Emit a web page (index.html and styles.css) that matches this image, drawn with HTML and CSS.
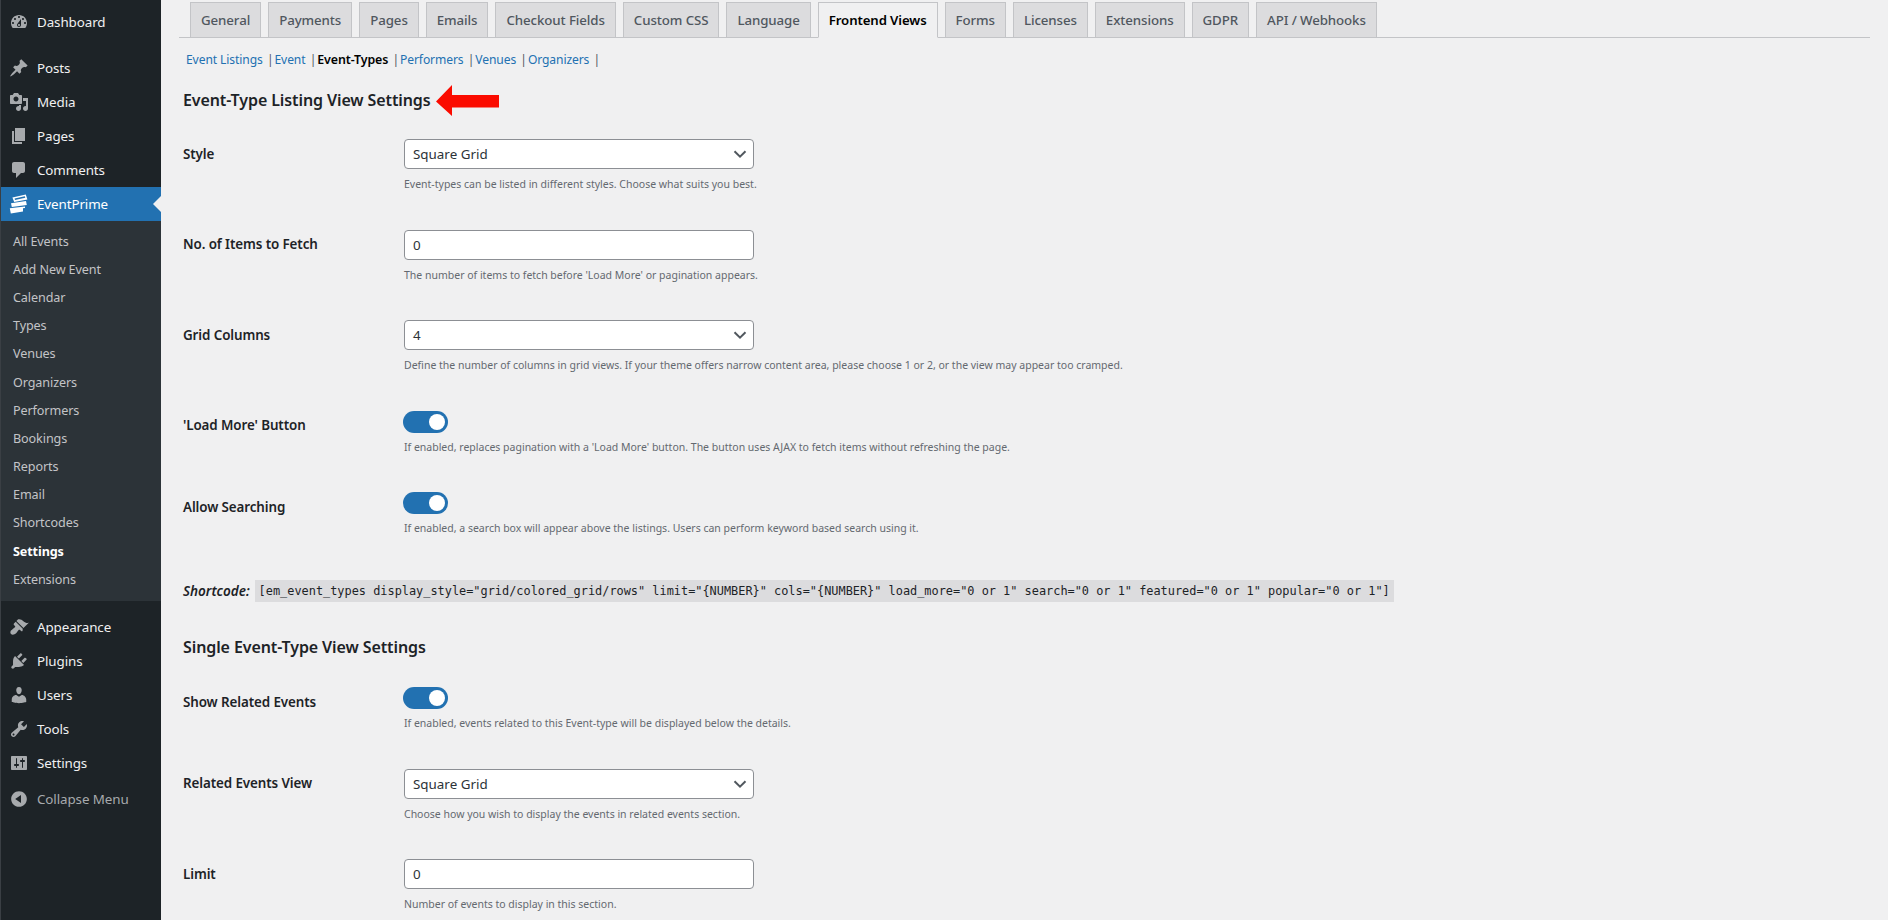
FILE: index.html
```html
<!DOCTYPE html>
<html lang="en">
<head>
<meta charset="utf-8">
<title>EventPrime Settings</title>
<link rel="stylesheet" href="styles.css">
</head>
<body>
<div class="page">
<aside class="sidebar">
  <nav class="menu">
    <a class="item gap-after"><svg class="ic" viewBox="0 0 20 20"><path fill-rule="evenodd" d="M3.76 16h12.48c1.1-1.37 1.76-3.11 1.76-5 0-4.42-3.58-8-8-8s-8 3.58-8 8c0 1.89.66 3.63 1.76 5zM10 4c.55 0 1 .45 1 1s-.45 1-1 1-1-.45-1-1 .45-1 1-1zM6 6c.55 0 1 .45 1 1s-.45 1-1 1-1-.45-1-1 .45-1 1-1zm8 0c.55 0 1 .45 1 1s-.45 1-1 1-1-.45-1-1 .45-1 1-1zm-5.37 5.55L12 7v6c0 1.1-.9 2-2 2s-2-.9-2-2c0-.57.24-1.08.63-1.45zM4 10c.55 0 1 .45 1 1s-.45 1-1 1-1-.45-1-1 .45-1 1-1zm12 0c.55 0 1 .45 1 1s-.45 1-1 1-1-.45-1-1 .45-1 1-1zm-5 3c0-.55-.45-1-1-1s-1 .45-1 1 .45 1 1 1 1-.45 1-1z"/></svg>Dashboard</a>
    <a class="item"><svg class="ic" viewBox="0 0 20 20"><path d="M10.44 3.02l1.82-1.82 6.36 6.35-1.83 1.82c-1.05-.68-2.48-.57-3.41.36l-.75.75c-.92.93-1.04 2.35-.35 3.41l-1.83 1.82-2.41-2.41-2.8 2.79c-.42.42-3.38 2.71-3.8 2.29s1.86-3.39 2.28-3.81l2.79-2.79L4.1 9.36l1.83-1.82c1.05.69 2.48.57 3.4-.36l.75-.75c.93-.92 1.05-2.35.36-3.41z"/></svg>Posts</a>
    <a class="item"><svg class="ic" viewBox="0 0 20 20"><path fill-rule="evenodd" d="M13 11V4c0-.55-.45-1-1-1h-1.67L9 1H5L3.67 3H2c-.55 0-1 .45-1 1v7c0 .55.45 1 1 1h10c.55 0 1-.45 1-1zM7 4.5c1.38 0 2.5 1.12 2.5 2.5S8.38 9.5 7 9.5 4.5 8.38 4.5 7 5.62 4.5 7 4.5zM14 6h5v10.5c0 1.38-1.12 2.5-2.5 2.5S14 17.88 14 16.5s1.12-2.5 2.5-2.5c.17 0 .34.02.5.05V9h-3V6zm-4 8.05V13h2v3.5c0 1.38-1.12 2.5-2.5 2.5S7 17.88 7 16.5 8.12 14 9.5 14c.17 0 .34.02.5.05z"/></svg>Media</a>
    <a class="item"><svg class="ic" viewBox="0 0 20 20"><path d="M6 15V2h10v13H6zm-1 1h8v2H3V5h2v11z"/></svg>Pages</a>
    <a class="item"><svg class="ic" viewBox="0 0 20 20"><path d="M5 2h9c1.1 0 2 .9 2 2v7c0 1.1-.9 2-2 2h-2l-5 5v-5H5c-1.1 0-2-.9-2-2V4c0-1.1.9-2 2-2z"/></svg>Comments</a>
    <a class="item active"><svg class="ic ic-ep" viewBox="0 0 20 20"><path fill-rule="evenodd" d="M3.4 3.6 16.8.6l1.6 4.8L5.2 8zM5.6 4.4l.4 1.5 10.3-2.2-.5-1.4zM2 9.2 17 6.9l.8 4.1-15 2.1zM.8 14.3 16 12.5v1.5l-2 .3v3.2L1.8 19.4z"/></svg>EventPrime</a>
    <div class="submenu">
      <a>All Events</a>
      <a>Add New Event</a>
      <a>Calendar</a>
      <a>Types</a>
      <a>Venues</a>
      <a>Organizers</a>
      <a>Performers</a>
      <a>Bookings</a>
      <a>Reports</a>
      <a>Email</a>
      <a>Shortcodes</a>
      <a class="current">Settings</a>
      <a>Extensions</a>
    </div>
    <a class="item"><svg class="ic" viewBox="0 0 20 20"><path d="M14.48 11.06L7.41 3.99l1.5-1.5c.5-.56 2.3-.47 3.51.32 1.21.8 1.43 1.28 2.91 2.1 1.18.64 2.45 1.26 4.45.85zm-.71.71L6.7 4.7 4.93 6.47c-.39.39-.39 1.02 0 1.41l1.06 1.06c.39.39.39 1.03 0 1.42-.6.6-1.43 1.11-2.21 1.69-.35.26-.7.53-1.01.84C1.43 13.23.78 15.78 2 17c1.23 1.22 3.77.57 5.1-.76.31-.31.58-.66.85-1.02.57-.78 1.08-1.61 1.69-2.21.39-.39 1.02-.39 1.41 0l1.06 1.06c.39.39 1.02.39 1.41 0z"/></svg>Appearance</a>
    <a class="item"><svg class="ic" viewBox="0 0 20 20"><path d="M13.11 4.36L9.87 7.6 8 5.73l3.24-3.24c.35-.34 1.05-.2 1.56.32.52.51.66 1.21.31 1.55zm-8 1.77l.91-1.12 9.01 9.01-1.19.84c-.71.71-2.63 1.16-3.82 1.16H6.14L4.9 17.26c-.59.59-1.54.59-2.12 0-.59-.58-.59-1.53 0-2.12l1.24-1.24v-3.88c0-1.13.4-3.19 1.09-3.89zm7.26 3.97l3.24-3.24c.34-.35 1.04-.21 1.55.31.52.51.66 1.21.31 1.55l-3.24 3.25z"/></svg>Plugins</a>
    <a class="item"><svg class="ic" viewBox="0 0 20 20"><path d="M10 9.25c-2.27 0-2.73-3.44-2.73-3.44C7 4.02 7.82 2 9.97 2c2.16 0 2.98 2.02 2.71 3.81 0 0-.41 3.44-2.68 3.44zm0 2.57L12.72 10c2.39 0 4.52 2.33 4.52 4.53v2.49s-3.65 1.13-7.24 1.13c-3.65 0-7.24-1.13-7.24-1.13v-2.49c0-2.25 1.94-4.48 4.47-4.48z"/></svg>Users</a>
    <a class="item"><svg class="ic" viewBox="0 0 20 20"><path fill-rule="evenodd" d="M16.68 9.77c-1.34 1.34-3.3 1.67-4.95.99l-5.41 6.52c-.99.99-2.59.99-3.58 0s-.99-2.59 0-3.57l6.52-5.42c-.68-1.65-.35-3.61.99-4.95 1.28-1.28 3.12-1.62 4.72-1.06l-2.89 2.89 2.82 2.82 2.86-2.87c.53 1.58.18 3.39-1.08 4.65zM3.81 16.21c.4.39 1.04.39 1.43 0 .4-.4.4-1.04 0-1.43-.39-.4-1.03-.4-1.43 0-.39.39-.39 1.03 0 1.43z"/></svg>Tools</a>
    <a class="item"><svg class="ic" viewBox="0 0 20 20"><path fill-rule="evenodd" d="M18 16V4c0-.55-.45-1-1-1H3c-.55 0-1 .45-1 1v12c0 .55.45 1 1 1h14c.55 0 1-.45 1-1zM8 11h1c.55 0 1 .45 1 1s-.45 1-1 1H8v1.5c0 .28-.22.5-.5.5s-.5-.22-.5-.5V13H6c-.55 0-1-.45-1-1s.45-1 1-1h1V5.5c0-.28.22-.5.5-.5s.5.22.5.5V11zm5-2h-1c-.55 0-1-.45-1-1s.45-1 1-1h1V5.5c0-.28.22-.5.5-.5s.5.22.5.5V7h1c.55 0 1 .45 1 1s-.45 1-1 1h-1v5.5c0 .28-.22.5-.5.5s-.5-.22-.5-.5V9z"/></svg>Settings</a>
    <a class="item collapse"><svg class="ic" viewBox="0 0 20 20"><path fill-rule="evenodd" d="M10 2.16c4.33 0 7.84 3.51 7.84 7.84s-3.51 7.84-7.84 7.84S2.16 14.33 2.16 10 5.71 2.16 10 2.16zm2 11.72V6.12L6.18 9.97z"/></svg>Collapse Menu</a>
  </nav>
</aside>
<main class="content">
  <div class="tabs">
    <a class="tab">General</a>
    <a class="tab">Payments</a>
    <a class="tab">Pages</a>
    <a class="tab">Emails</a>
    <a class="tab">Checkout Fields</a>
    <a class="tab">Custom CSS</a>
    <a class="tab">Language</a>
    <a class="tab tab-active">Frontend Views</a>
    <a class="tab">Forms</a>
    <a class="tab">Licenses</a>
    <a class="tab">Extensions</a>
    <a class="tab">GDPR</a>
    <a class="tab">API / Webhooks</a>
  </div>
  <div class="subnav">
    <a>Event Listings</a><span class="sep">|</span>
    <a>Event</a><span class="sep">|</span>
    <a class="sub-current">Event-Types</a><span class="sep">|</span>
    <a>Performers</a><span class="sep">|</span>
    <a>Venues</a><span class="sep">|</span>
    <a>Organizers</a><span class="sep">|</span>
  </div>
  <h2 class="title first">Event-Type Listing View Settings
    <svg class="arrow" viewBox="0 0 63 31"><path d="M0 16.5 16 0v10h47v12.5H16V31z"/></svg>
  </h2>

  <div class="row">
    <div class="label">Style</div>
    <div class="field">
      <div class="control select">Square Grid<svg class="chev" viewBox="0 0 16 16"><path d="M2.5 5.2 8 10.6l5.5-5.4"/></svg></div>
      <p class="hint">Event-types can be listed in different styles. Choose what suits you best.</p>
    </div>
  </div>
  <div class="row">
    <div class="label">No. of Items to Fetch</div>
    <div class="field">
      <div class="control">0</div>
      <p class="hint">The number of items to fetch before 'Load More' or pagination appears.</p>
    </div>
  </div>
  <div class="row">
    <div class="label">Grid Columns</div>
    <div class="field">
      <div class="control select">4<svg class="chev" viewBox="0 0 16 16"><path d="M2.5 5.2 8 10.6l5.5-5.4"/></svg></div>
      <p class="hint">Define the number of columns in grid views. If your theme offers narrow content area, please choose 1 or 2, or the view may appear too cramped.</p>
    </div>
  </div>
  <div class="row row-toggle">
    <div class="label">'Load More' Button</div>
    <div class="field">
      <div class="toggle"></div>
      <p class="hint hint-toggle">If enabled, replaces pagination with a 'Load More' button. The button uses AJAX to fetch items without refreshing the page.</p>
    </div>
  </div>
  <div class="row row-toggle">
    <div class="label">Allow Searching</div>
    <div class="field">
      <div class="toggle"></div>
      <p class="hint hint-toggle">If enabled, a search box will appear above the listings. Users can perform keyword based search using it.</p>
    </div>
  </div>
  <div class="shortcode"><em>Shortcode:</em><code>[em_event_types display_style="grid/colored_grid/rows" limit="{NUMBER}" cols="{NUMBER}" load_more="0 or 1" search="0 or 1" featured="0 or 1" popular="0 or 1"]</code></div>
  <h2 class="title second">Single Event-Type View Settings</h2>
  <div class="row row-toggle">
    <div class="label">Show Related Events</div>
    <div class="field">
      <div class="toggle"></div>
      <p class="hint hint-toggle">If enabled, events related to this Event-type will be displayed below the details.</p>
    </div>
  </div>
  <div class="row">
    <div class="label">Related Events View</div>
    <div class="field">
      <div class="control select">Square Grid<svg class="chev" viewBox="0 0 16 16"><path d="M2.5 5.2 8 10.6l5.5-5.4"/></svg></div>
      <p class="hint">Choose how you wish to display the events in related events section.</p>
    </div>
  </div>
  <div class="row">
    <div class="label">Limit</div>
    <div class="field">
      <div class="control">0</div>
      <p class="hint">Number of events to display in this section.</p>
    </div>
  </div>
</main>
</div>
</body>
</html>
```
FILE: styles.css
```css
* { box-sizing: border-box; }
html, body { margin: 0; height: 920px; overflow: hidden; }
body { background: #f0f0f1; font-family: "Noto Sans", "Liberation Sans", sans-serif; font-size: 13px; color: #1d2327; }
.page { display: flex; height: 920px; }

.sidebar { width: 161px; flex: none; background: #1d2327; border-left: 1px solid #3a3f44; }
.menu { display: flex; flex-direction: column; padding-top: 5px; }
.item { display: flex; align-items: center; height: 34px; color: #f0f0f1; font-size: 13.4px; letter-spacing: -.1px; }
.item .ic { width: 20px; height: 20px; margin: 0 8px 0 8px; fill: #a7aaad; flex: none; }
.gap-after { margin-bottom: 11.6px; }
.active { background: #2271b1; color: #fff; position: relative; }
.active .ic { fill: #fff; }
.active::after { content: ""; position: absolute; right: 0; top: 9px; border: 8px solid transparent; border-right-color: #f0f0f1; border-left-width: 0; }
.submenu { display: flex; flex-direction: column; background: #2c3338; padding: 7px 0 7px; margin-bottom: 9px; }
.submenu a { height: 28.2px; line-height: 28px; padding-left: 12px; color: #c3c4c7; font-size: 12.6px; letter-spacing: -.1px; white-space: nowrap; }
.submenu .current { color: #fff; font-weight: 700; }
.collapse { color: #a7aaad; margin-top: 2px; }

.content { flex: 1; min-width: 0; padding: 0 18px 0 18px; }
.tabs { display: flex; gap: 7px; height: 38px; padding: 2px 0 0 11px; border-bottom: 1px solid #c3c4c7; }
.tab { height: 36px; padding: 0 10px; line-height: 34px; background: #dcdcde; border: 1px solid #c3c4c7; color: #50575e; font-size: 13.3px; font-weight: 500; letter-spacing: -.1px; white-space: nowrap; }
.tab-active { background: #f0f0f1; border-bottom-color: #f0f0f1; color: #000; font-weight: 600; font-size: 13.2px; }

.subnav { display: flex; height: 22px; margin: 11px 0 0 7px; line-height: 22px; font-size: 12.1px; letter-spacing: -.1px; color: #50575e; }
.subnav a { color: #2271b1; }
.subnav .sub-current { color: #000; font-weight: 600; font-size: 12.4px; }
.sep { margin: 0 1px 0 4.2px; }

.title { display: flex; align-items: center; gap: 5px; height: 26px; margin: 0; font-size: 16px; font-weight: 600; color: #1d2327; letter-spacing: -.1px; }
.first { margin: 16px 0 26px 4px; }
.second { margin: 33px 0 27.5px 4px; }
.arrow { width: 63px; height: 31px; fill: #fb0b00; }

.row { display: flex; height: 90.6px; margin-left: 4px; }
.row-toggle { height: 81.5px; }
.label { width: 221px; flex: none; padding-top: 5.5px; font-weight: 600; font-size: 13.4px; letter-spacing: -.1px; color: #1d2327; }
.field { display: flex; flex-direction: column; align-items: flex-start; }
.control { position: relative; width: 350px; height: 30px; padding-left: 8px; line-height: 28px; background: #fff; border: 1px solid #8c8f94; border-radius: 4px; font-size: 13.4px; color: #2c3338; }
.chev { position: absolute; right: 5px; top: 6px; width: 16px; height: 16px; fill: none; stroke: #50575e; stroke-width: 2; }
.hint { margin: 8px 0 0; font-size: 10.5px; line-height: 15px; color: #646970; white-space: nowrap; }
.hint-toggle { margin-top: 7px; }
.toggle { position: relative; width: 45px; height: 22px; margin-left: -1px; border-radius: 11px; background: #2271b1; }
.toggle::after { content: ""; position: absolute; right: 3px; top: 3px; width: 16px; height: 16px; border-radius: 50%; background: #fff; }

.shortcode { display: flex; align-items: center; gap: 5px; height: 20px; margin: 7px 0 0 4px; font-size: 13.5px; }
.shortcode em { font-weight: 600; color: #1d2327; }
.shortcode code { padding: 3px 4px; background: #dcdcde; font-family: "DejaVu Sans Mono", "Liberation Mono", monospace; font-size: 11.9px; line-height: 16px; color: #1d2327; white-space: nowrap; }
```
